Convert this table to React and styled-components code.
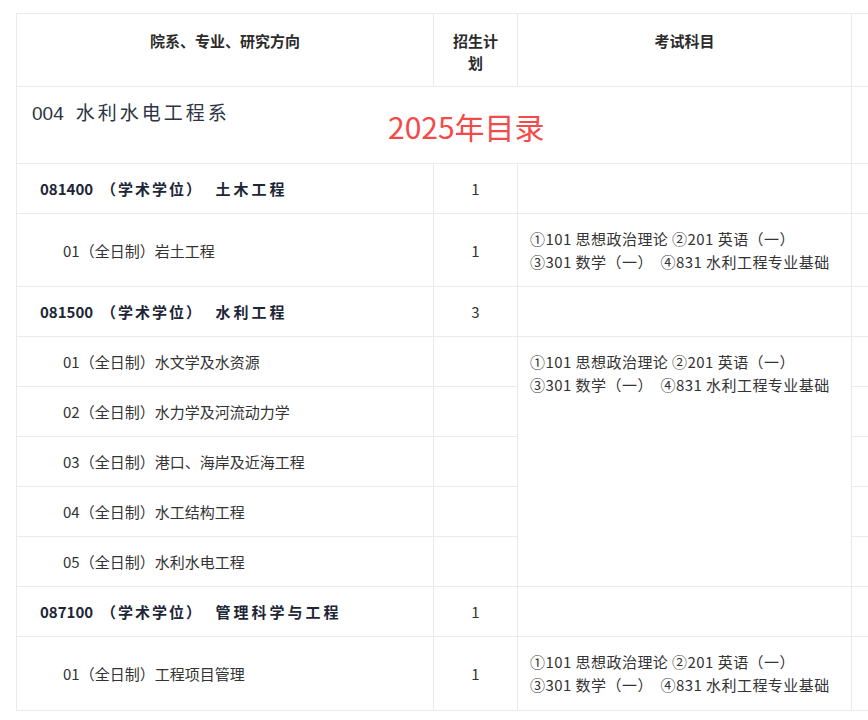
import React from "react";
import styled, { createGlobalStyle } from "styled-components";

const Global = createGlobalStyle`
  html, body { margin: 0; padding: 0; background: #fff; }
  body { font-family: "Noto Sans CJK SC", "Noto Sans", sans-serif; color: #333; }
`;

const Page = styled.div`
  width: 868px;
  height: 720px;
  overflow: hidden;
  padding: 13px 0 0 16px;
  box-sizing: border-box;
`;

const Table = styled.table`
  border-collapse: collapse;
  table-layout: fixed;
  width: 1000px;
  font-size: 15px;
`;

const Row = styled.tr`
  height: ${(p) => p.$h}px;
`;

const border = "1px solid #e9eaef";

const HeadCell = styled.th`
  border: ${border};
  vertical-align: top;
  text-align: center;
  padding: 16px 12px 0;
  font-weight: 700;
  line-height: 22px;
  color: #2b2b2b;
`;

const DeptCell = styled.td`
  border: ${border};
  vertical-align: top;
  padding: 15px 15px 0;
  position: relative;
  color: #2d3544;
  font-size: 19px;
  line-height: 20px;
`;

const DeptCode = styled.span`
  font-family: "Liberation Sans Narrow", "Liberation Sans", sans-serif;
  margin-right: 12px;
`;

const Kai = styled.span`
  letter-spacing: ${(p) => p.$ls || 2}px;
  margin-left: ${(p) => p.$ml || 0}px;
`;

const Stamp = styled.span`
  position: absolute;
  left: 371px;
  top: 21px;
  font-size: 30px;
  line-height: 36px;
  color: #f34a4a;
  white-space: nowrap;
`;

const MajorCell = styled.td`
  border: ${border};
  vertical-align: middle;
  padding: 0 0 0 23px;
  font-weight: 700;
  color: #1d2636;
  white-space: nowrap;
`;

const Code = styled.span`
  margin-right: 8px;
`;

const DirCell = styled.td`
  border: ${border};
  vertical-align: middle;
  padding: 0 0 0 46px;
  color: #333;
  white-space: nowrap;
`;

const CountCell = styled.td`
  border: ${border};
  vertical-align: middle;
  text-align: center;
  color: #333;
`;

const ExamCell = styled.td`
  border: ${border};
  vertical-align: top;
  padding: 13px 12px 0;
  line-height: 23px;
  letter-spacing: 0.45px;
  color: #333;
  white-space: nowrap;
`;

const Blank = styled.td`
  border: ${border};
`;

const exam = (
  <>
    ①101 思想政治理论 ②201 英语（一）
    <br />
    ③301 数学（一） &nbsp;④831 水利工程专业基础
  </>
);

const Major = ({ code, name, count }) => (
  <Row $h={50}>
    <MajorCell>
      <Code>{code}</Code>
      <Kai>（学术学位）</Kai> <Kai $ls={3} $ml={9}>{name}</Kai>
    </MajorCell>
    <CountCell>{count}</CountCell>
    <Blank />
    <Blank />
  </Row>
);

export default function App() {
  return (
    <Page>
      <Global />
      <Table>
        <colgroup>
          <col style={{ width: 417 }} />
          <col style={{ width: 84 }} />
          <col style={{ width: 334 }} />
          <col />
        </colgroup>
        <thead>
          <Row $h={73}>
            <HeadCell>院系、专业、研究方向</HeadCell>
            <HeadCell>招生计划</HeadCell>
            <HeadCell>考试科目</HeadCell>
            <HeadCell />
          </Row>
        </thead>
        <tbody>
          <Row $h={77}>
            <DeptCell colSpan={3}>
              <DeptCode>004</DeptCode>
              <Kai $ls={3}>水利水电工程系</Kai>
              <Stamp>2025年目录</Stamp>
            </DeptCell>
            <Blank />
          </Row>

          <Major code="081400" name="土木工程" count="1" />
          <Row $h={73}>
            <DirCell>01（全日制）岩土工程</DirCell>
            <CountCell>1</CountCell>
            <ExamCell>{exam}</ExamCell>
            <Blank />
          </Row>

          <Major code="081500" name="水利工程" count="3" />
          <Row $h={50}>
            <DirCell>01（全日制）水文学及水资源</DirCell>
            <CountCell />
            <ExamCell rowSpan={5}>{exam}</ExamCell>
            <Blank />
          </Row>
          <Row $h={50}>
            <DirCell>02（全日制）水力学及河流动力学</DirCell>
            <CountCell />
            <Blank />
          </Row>
          <Row $h={50}>
            <DirCell>03（全日制）港口、海岸及近海工程</DirCell>
            <CountCell />
            <Blank />
          </Row>
          <Row $h={50}>
            <DirCell>04（全日制）水工结构工程</DirCell>
            <CountCell />
            <Blank />
          </Row>
          <Row $h={50}>
            <DirCell>05（全日制）水利水电工程</DirCell>
            <CountCell />
            <Blank />
          </Row>

          <Major code="087100" name="管理科学与工程" count="1" />
          <Row $h={74}>
            <DirCell>01（全日制）工程项目管理</DirCell>
            <CountCell>1</CountCell>
            <ExamCell>{exam}</ExamCell>
            <Blank />
          </Row>
        </tbody>
      </Table>
    </Page>
  );
}
